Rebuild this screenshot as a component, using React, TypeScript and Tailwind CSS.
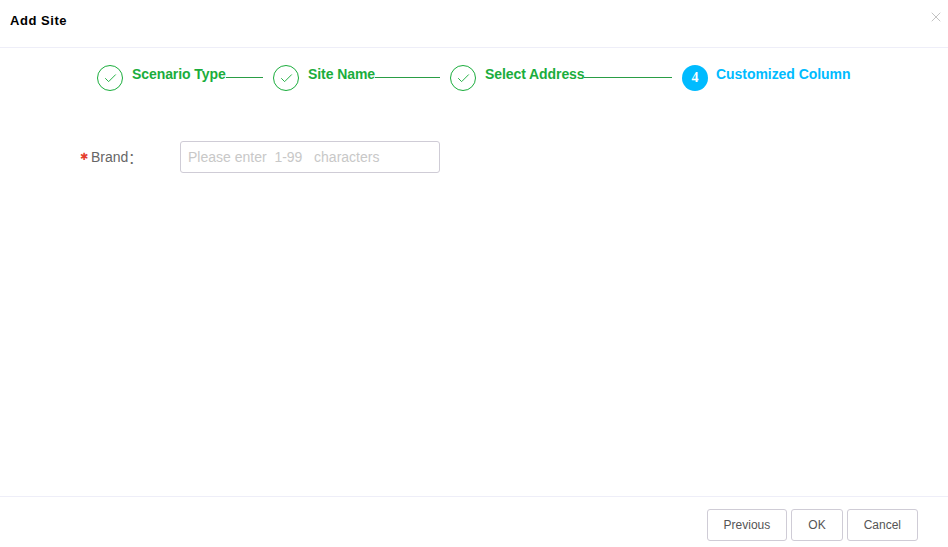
import { Check, X } from 'lucide-react';

const STEPS = [
  { label: 'Scenario Type', width: 'w-[94px]', line: 'w-[37px]' },
  { label: 'Site Name', width: 'w-[67px]', line: 'w-[65px]' },
  { label: 'Select Address', width: 'w-[99px]', line: 'w-[88px]' },
];

function DoneStep({ label, width, line }: { label: string; width: string; line: string }) {
  return (
    <div className="flex items-start">
      <div className="w-[26px] h-[26px] rounded-full border border-[#1aad3c] flex items-center justify-center text-[#1aad3c]">
        <Check size={15} strokeWidth={1.5} />
      </div>
      <span className={`${width} ml-[9px] whitespace-nowrap text-sm font-bold leading-[18px] tracking-[-0.08px] text-[#1aad3c]`}>
        {label}
      </span>
      <div className={`${line} h-px mt-[12px] mr-[10px] bg-[#2a9d45]`} />
    </div>
  );
}

function FooterButton({ children }: { children: string }) {
  return (
    <button className="h-[32px] px-4 rounded-[3px] border border-[#cfccd6] bg-white text-xs text-[#555]">
      {children}
    </button>
  );
}

export default function App() {
  return (
    <div className="w-[948px] h-[547px] flex flex-col bg-white font-['Liberation_Sans',Arial,sans-serif]">
      <div className="h-[48px] shrink-0 flex items-start justify-between border-b border-[#eeeef8] pl-[10px] pr-[4px]">
        <h1 className="mt-[13px] text-[13px] font-bold leading-4 tracking-[0.55px] text-black">Add Site</h1>
        <X size={16} strokeWidth={1.2} className="mt-[9px] text-[#b4b4b4]" />
      </div>

      <div className="flex items-start pl-[97px] pt-[17px]">
        {STEPS.map((s) => (
          <DoneStep key={s.label} label={s.label} width={s.width} line={s.line} />
        ))}
        <div className="flex items-start">
          <div className="w-[26px] h-[26px] rounded-full bg-[#00bbff] flex items-center justify-center font-['Liberation_Serif',serif] text-sm font-bold text-white">
            4
          </div>
          <span className="ml-2 text-sm font-bold leading-[18px] tracking-[-0.05px] text-[#00bbff]">Customized Column</span>
        </div>
      </div>

      <div className="flex-1 flex items-start pl-[80px] pt-[50px]">
        <label className="w-[100px] h-[32px] flex items-center text-sm text-[#666]">
          <span className="w-[11px] font-['DejaVu_Sans',sans-serif] text-[10px] text-[#e53e2e]">✱</span>
          <span>Brand</span>
          <span className="font-['Noto_Sans_CJK_SC',sans-serif]">：</span>
        </label>
        <input
          className="w-[260px] h-[32px] px-[7px] rounded-[3px] border border-[#cfccd6] text-sm outline-none placeholder:text-[#c8c8c8] whitespace-pre"
          placeholder="Please enter  1-99   characters"
        />
      </div>

      <div className="h-[51px] shrink-0 flex items-start justify-end gap-1 border-t border-[#eeeef8] pt-[12px] pr-[30px]">
        <FooterButton>Previous</FooterButton>
        <FooterButton>OK</FooterButton>
        <FooterButton>Cancel</FooterButton>
      </div>
    </div>
  );
}
